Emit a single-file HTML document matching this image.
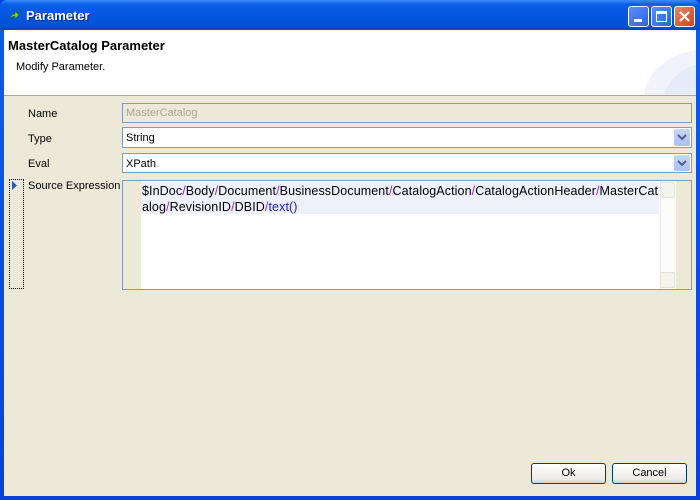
<!DOCTYPE html>
<html><head><style>
*{margin:0;padding:0;box-sizing:border-box}
body{width:700px;height:500px;overflow:hidden;font-family:"Liberation Sans",Tahoma,sans-serif;font-size:11px;background:#0842d8}
.win{position:absolute;left:0;top:0;width:700px;height:500px;border-radius:7px 7px 0 0;background:linear-gradient(#0a5fe8,#0842d8);}
.title{position:absolute;left:0;top:0;width:700px;height:30px;border-radius:7px 7px 0 0;background:linear-gradient(#3a8cf8 0%,#0a5ee8 15%,#0356e0 50%,#0351d8 85%,#0444c0 100%)}
.title span{position:absolute;left:26px;top:8px;color:#fff;font-weight:bold;font-size:13px;text-shadow:1px 1px #0a2a8a}
.tb{position:absolute;top:6px;width:21px;height:21px;border:1px solid #fff;border-radius:3px;background:linear-gradient(135deg,#5b8ff8,#2a62e8)}
.client{position:absolute;left:4px;top:30px;width:692px;height:466px;background:#ece9d8}
.hdr{position:absolute;left:0;top:0;width:692px;height:66px;background:#fff;border-bottom:1px solid #aca899;overflow:hidden}
.lbl{position:absolute;left:24px;font-size:11px;color:#000}
.fld{position:absolute;left:118px;width:570px;height:20px;border:1px solid #7f9db9;background:#fff;padding:3px 3px;font-size:11px}
.dd{position:absolute;right:1px;top:1px;width:16px;height:16px;border-radius:2px;background:linear-gradient(#c6d6fc,#a9c1f6);}
.btn{position:absolute;top:433px;width:75px;height:21px;border:1px solid #003c74;border-radius:3px;background:linear-gradient(#fff,#ecebe6 80%,#d6d0c5);text-align:center;line-height:19px;font-size:11px}
.s{color:#8a2be2}
</style></head><body>
<div class="win">
<div class="title">
<svg style="position:absolute;left:9px;top:11px" width="11" height="10"><path d="M1 8 Q2 3 6 3 L6 0 L10 4 L6 8 L6 5 Q3 5 1 8Z" fill="#7ed321" stroke="#2a6a10" stroke-width=".6"/></svg>
<span>Parameter</span>
<div class="tb" style="left:628px"><div style="position:absolute;left:5px;top:12px;width:8px;height:3px;background:#fff"></div></div>
<div class="tb" style="left:651px"><div style="position:absolute;left:4px;top:4px;width:11px;height:11px;border:1px solid #fff;border-top-width:3px"></div></div>
<div class="tb" style="left:674px;background:linear-gradient(135deg,#e88a6a,#d0401a)"><svg width="19" height="19" style="position:absolute;left:0;top:0"><path d="M5 5L14 14M14 5L5 14" stroke="#fff" stroke-width="2.2"/></svg></div>
</div>
<div class="client">
<div class="hdr">
<div style="position:absolute;left:640px;top:20px;width:120px;height:100px;border-radius:50%;background:#f0f3fb"></div>
<div style="position:absolute;left:660px;top:32px;width:100px;height:80px;border-radius:50%;background:#e6ebf8"></div>
<div style="position:absolute;left:4px;top:8px;font-weight:bold;font-size:13px">MasterCatalog Parameter</div>
<div style="position:absolute;left:12px;top:31px;font-size:11px">Modify Parameter.</div>
</div>
<div class="lbl" style="top:78px">Name</div>
<div class="fld" style="top:73px;background:#ece9d8;color:#aca899">MasterCatalog</div>
<div class="lbl" style="top:103px">Type</div>
<div class="fld" style="top:97px;height:21px;padding-top:4px">String<div class="dd" style="height:17px"><svg width="16" height="16"><path d="M4 6L8 10L12 6" stroke="#4d6185" stroke-width="2" fill="none"/></svg></div></div>
<div class="lbl" style="top:128px">Eval</div>
<div class="fld" style="top:123px;padding-top:4px">XPath<div class="dd"><svg width="16" height="16"><path d="M4 6L8 10L12 6" stroke="#4d6185" stroke-width="2" fill="none"/></svg></div></div>
<div style="position:absolute;left:5px;top:149px;width:15px;height:110px;border:1px dotted #000"><svg width="8" height="10" style="position:absolute;left:1px;top:1px"><path d="M1 0L6 4.5L1 9Z" fill="#2a5aa0"/></svg></div>
<div class="lbl" style="top:150px">Source Expression</div>
<div style="position:absolute;left:118px;top:150px;width:570px;height:110px;border:1px solid #7f9db9;background:#fff">
<div style="position:absolute;left:0;top:0;width:18px;height:108px;background:#ece9d8"></div>
<div style="position:absolute;left:18px;top:1px;width:518px;height:32px;background:#eef0fc"></div>
<div style="position:absolute;left:19px;top:2px;width:520px;font-size:12.5px;letter-spacing:0.1px;line-height:16px;white-space:nowrap">$InDoc<span class="s">/</span>Body<span class="s">/</span>Document<span class="s">/</span>BusinessDocument<span class="s">/</span>CatalogAction<span class="s">/</span>CatalogActionHeader<span class="s">/</span>MasterCat<br>alog<span class="s">/</span>RevisionID<span class="s">/</span>DBID<span class="s">/</span><span style="color:#2020d0">text()</span></div>
<div style="position:absolute;left:537px;top:0;width:16px;height:108px;background:#fbfbf8;border-left:1px solid #eee"></div>
<div style="position:absolute;left:537px;top:1px;width:15px;height:16px;border:1px solid #e4e2da;border-radius:2px;background:#f4f3ee"></div>
<div style="position:absolute;left:537px;top:91px;width:15px;height:16px;border:1px solid #e4e2da;border-radius:2px;background:#f4f3ee"></div>
<div style="position:absolute;left:553px;top:0;width:15px;height:108px;background:#ece9d8"></div>
</div>
<div class="btn" style="left:527px">Ok</div>
<div class="btn" style="left:608px">Cancel</div>
</div>
</div>
</body></html>
